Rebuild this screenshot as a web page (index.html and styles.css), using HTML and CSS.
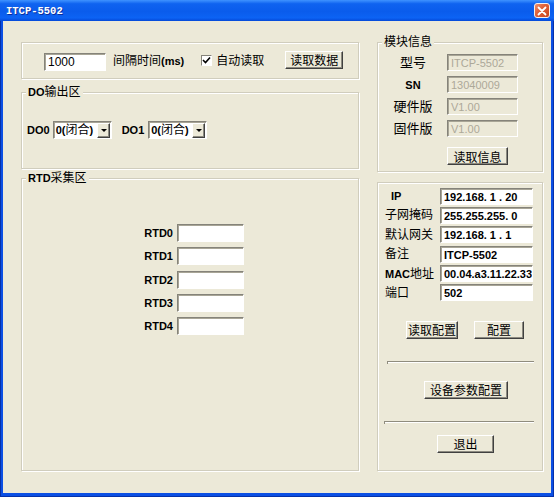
FILE: index.html
```html
<!DOCTYPE html>
<html lang="zh-CN">

<head>
  <meta charset="UTF-8">
  <title>ITCP-5502</title>
  <link rel="stylesheet" href="styles.css">
</head>

<body>
  <div class="window">
    <!-- Title bar -->
    <div class="titlebar">
      <span class="title">ITCP-5502</span>
      <span class="close-btn">
        <svg width="10" height="10" viewBox="0 0 10 10"><path d="M1.5 1.5 L8.5 8.5 M8.5 1.5 L1.5 8.5" stroke="#fff" stroke-width="1.8" stroke-linecap="round"/></svg>
      </span>
    </div>

    <div class="client">
      <!-- Left column -->
      <div class="col col-left">
        <div class="group panel-top">
          <div class="edit w-interval">1000</div>
          <span class="lbl lbl-interval">间隔时间<b>(ms)</b></span>
          <span class="checkbox">
            <svg width="9" height="9" viewBox="0 0 9 9"><path d="M1 4 L3.5 6.5 L8 1.5" fill="none" stroke="#000" stroke-width="1.6"/></svg>
          </span>
          <span class="lbl lbl-auto">自动读取</span>
          <span class="btn btn-read-data">读取数据</span>
        </div>

        <!-- DO output -->
        <div class="group group-do">
          <span class="legend"><b>DO</b>输出区</span>
          <div class="do-row">
            <span class="tag">DO0</span>
            <div class="combo combo-do0"><span class="combo-text"><b>0(</b>闭合<b>)</b></span><span class="combo-arrow"></span></div>
            <span class="tag tag-do1">DO1</span>
            <div class="combo combo-do1"><span class="combo-text"><b>0(</b>闭合<b>)</b></span><span class="combo-arrow"></span></div>
          </div>
        </div>

        <!-- RTD inputs -->
        <div class="group group-rtd">
          <span class="legend"><b>RTD</b>采集区</span>
          <div class="rtd-grid">
            <span class="tag">RTD0</span><div class="edit"></div>
            <span class="tag">RTD1</span><div class="edit"></div>
            <span class="tag">RTD2</span><div class="edit"></div>
            <span class="tag">RTD3</span><div class="edit"></div>
            <span class="tag">RTD4</span><div class="edit"></div>
          </div>
        </div>
      </div>

      <!-- Right column -->
      <div class="col col-right">
        <div class="group group-info">
          <span class="legend">模块信息</span>
          <div class="info-grid">
            <span class="lbl">型号</span><div class="edit disabled">ITCP-5502</div>
            <span class="tag">SN</span><div class="edit disabled">13040009</div>
            <span class="lbl">硬件版</span><div class="edit disabled">V1.00</div>
            <span class="lbl">固件版</span><div class="edit disabled">V1.00</div>
          </div>
          <span class="btn btn-read-info">读取信息</span>
        </div>

        <div class="group group-net">
          <div class="net-grid">
            <span class="tag tag-ip">IP</span><div class="edit">192.168. 1 . 20</div>
            <span class="lbl">子网掩码</span><div class="edit">255.255.255. 0</div>
            <span class="lbl">默认网关</span><div class="edit">192.168. 1 . 1</div>
            <span class="lbl">备注</span><div class="edit">ITCP-5502</div>
            <span class="lbl"><b class="mac">MAC</b>地址</span><div class="edit">00.04.a3.11.22.33</div>
            <span class="lbl">端口</span><div class="edit">502</div>
          </div>
          <div class="btn-row">
            <span class="btn btn-read-cfg">读取配置</span>
            <span class="btn btn-cfg">配置</span>
          </div>
          <div class="track track-1"></div>
          <span class="btn btn-dev">设备参数配置</span>
          <div class="track track-2"></div>
          <span class="btn btn-exit">退出</span>
        </div>
      </div>
    </div>
  </div>
</body>

</html>
```

FILE: styles.css
```css
body {
  margin: 0;
  padding: 0;
  width: 554px;
  height: 497px;
  font-family: "Liberation Sans", "Noto Sans CJK SC", sans-serif;
  font-size: 12px;
  color: #000;
  overflow: hidden;
}

/* Window frame */
.window {
  width: 554px;
  height: 497px;
  box-sizing: border-box;
  display: flex;
  flex-direction: column;
  padding: 0 3px 4px;
  background: #0b4fe4;
  box-shadow: inset 1px 0 0 #0631a8, inset -1px 0 0 #0631a8, inset 0 -1px 0 #0631a8;
}

.titlebar {
  height: 21px;
  margin: 0 -3px;
  padding: 0 4px 0 6px;
  display: flex;
  align-items: center;
  justify-content: space-between;
  background: linear-gradient(to bottom, #3f93ff 0%, #0f63f0 18%, #0a5cec 55%, #0c63f4 85%, #0448d8 100%);
  flex-shrink: 0;
}

.title {
  color: #fff;
  font-family: "Liberation Mono", monospace;
  font-weight: bold;
  font-size: 10.5px;
  text-shadow: 1px 1px 0 #0a2f9c;
}

.close-btn {
  width: 16px;
  height: 15px;
  box-sizing: border-box;
  border: 1px solid #f4f0ee;
  border-radius: 3px;
  background-color: #d9552d;
  background-image: linear-gradient(135deg, #f0906a 0%, #e0623a 40%, #c9441b 100%);
  display: flex;
  align-items: center;
  justify-content: center;
}

/* Dialog client area */
.client {
  flex: 1;
  background: #ece9d8;
  display: flex;
  gap: 18px;
  padding: 0 8px 0 18px;
}

.col {
  display: flex;
  flex-direction: column;
}

.col-left { width: 338px; }
.col-right { width: 166px; }

/* Etched group boxes */
.group {
  position: relative;
  box-sizing: border-box;
  border: 1px solid #d0cdbd;
  box-shadow: inset 1px 1px 0 #fff, 1px 1px 0 #fff;
}

.legend {
  position: absolute;
  top: -9px;
  left: 4px;
  padding: 0 2px;
  line-height: 16px;
  background: #ece9d8;
  font-size: 12px;
}

.legend b { font-size: 11px; }

.lbl {
  font-size: 12px;
  line-height: 16px;
  white-space: nowrap;
}

.lbl b { font-size: 11px; }

.tag {
  font-size: 11px;
  font-weight: bold;
  line-height: 16px;
  white-space: nowrap;
}

/* Edit controls */
.edit {
  box-sizing: border-box;
  height: 18px;
  border: 1px solid;
  border-color: #85837a #fff #fff #85837a;
  box-shadow: inset 1px 1px 0 #a8a596;
  background: #fff;
  padding: 1px 0 0 3px;
  font-size: 11px;
  font-weight: bold;
  line-height: 15px;
  white-space: nowrap;
  overflow: hidden;
}

.edit.disabled {
  background: #ece9d8;
  color: #aca899;
  font-weight: normal;
}

/* Push buttons */
.btn {
  box-sizing: border-box;
  height: 18px;
  display: flex;
  align-items: center;
  justify-content: center;
  border: 1px solid;
  border-color: #fff #404040 #404040 #fff;
  box-shadow: inset -1px -1px 0 #8c8a80;
  background: #ece9d8;
  font-size: 12px;
  white-space: nowrap;
}

/* Top panel */
.panel-top {
  margin-top: 21px;
  height: 37px;
  display: flex;
  align-items: center;
  padding-left: 22px;
}

.w-interval {
  width: 62px;
  margin-top: 2px;
  font-weight: normal;
  font-size: 12px;
}

.lbl-interval { margin-left: 7px; }

.checkbox {
  width: 11px;
  height: 11px;
  box-sizing: border-box;
  margin-left: 17px;
  background: #fff;
  border: 1px solid;
  border-color: #85837a #fff #fff #85837a;
  display: flex;
  align-items: center;
  justify-content: center;
}

.lbl-auto { margin-left: 4px; }

.btn-read-data {
  width: 58px;
  margin-left: 21px;
  margin-top: -2px;
}

/* DO group */
.group-do {
  margin-top: 13px;
  height: 77px;
  padding: 28px 0 0 5px;
}

.do-row {
  display: flex;
  align-items: center;
}

.combo {
  box-sizing: border-box;
  width: 59px;
  height: 18px;
  display: flex;
  align-items: center;
  justify-content: space-between;
  border: 1px solid;
  border-color: #85837a #fff #fff #85837a;
  box-shadow: inset 1px 1px 0 #a8a596;
  background: #fff;
  padding: 1px 1px 1px 2px;
}

.combo-do0 { margin-left: 3px; }
.combo-do1 { margin-left: 4px; }
.tag-do1 { margin-left: 10px; }

.combo-text {
  font-size: 12px;
  line-height: 14px;
}

.combo-text b { font-size: 11px; }

.combo-arrow {
  position: relative;
  width: 13px;
  height: 15px;
  box-sizing: border-box;
  border: 1px solid;
  border-color: #fff #404040 #404040 #fff;
  box-shadow: inset -1px -1px 0 #8c8a80;
  background: #ece9d8;
}

.combo-arrow::after {
  content: "";
  position: absolute;
  left: 3px;
  top: 5px;
  border-left: 3px solid transparent;
  border-right: 3px solid transparent;
  border-top: 3px solid #000;
}

/* RTD group */
.group-rtd {
  margin-top: 9px;
  height: 293px;
  padding: 45px 0 0 99px;
}

.rtd-grid {
  display: grid;
  grid-template-columns: 52px 67px;
  grid-auto-rows: 18px;
  row-gap: 5.25px;
  column-gap: 4px;
  align-items: center;
}

.rtd-grid .tag { text-align: right; }

/* Module info group */
.group-info {
  margin-top: 21px;
  height: 130px;
  padding: 11px 0 0 9px;
}

.info-grid {
  display: grid;
  grid-template-columns: 52px 71px;
  grid-auto-rows: 17px;
  row-gap: 5px;
  column-gap: 8px;
  align-items: center;
}

.info-grid .lbl,
.info-grid .tag {
  text-align: center;
}

.info-grid .lbl { font-size: 13px; }

.info-grid .edit { height: 17px; }

.btn-read-info {
  width: 61px;
  height: 18px;
  margin: 10px 0 0 60px;
}

/* Network settings group */
.group-net {
  margin-top: 10px;
  height: 289px;
  display: flex;
  flex-direction: column;
  align-items: flex-start;
  padding: 5px 0 0 7px;
}

.net-grid {
  display: grid;
  grid-template-columns: 55px 93px;
  grid-auto-rows: 16px;
  row-gap: 3.4px;
  align-items: center;
}

.net-grid .edit {
  height: 17px;
  font-size: 11px;
}

.tag-ip { padding-left: 6px; }
.mac { font-size: 11px; }

.btn-row {
  display: flex;
  gap: 16px;
  margin: 20px 0 0 21px;
}

.btn-read-cfg { width: 52px; }
.btn-cfg { width: 50px; }

.track {
  height: 3px;
  box-sizing: border-box;
  border-top: 1px solid #8f8c7e;
  border-left: 1px solid #8f8c7e;
  box-shadow: inset 0 1px 0 #fff;
}

.track-1 {
  width: 147px;
  margin: 22px 0 0 2px;
}

.btn-dev {
  width: 84px;
  margin: 17px 0 0 39px;
}

.track-2 {
  width: 150px;
  margin: 22px 0 0 -1px;
}

.btn-exit {
  width: 57px;
  margin: 11px 0 0 52px;
}
```
